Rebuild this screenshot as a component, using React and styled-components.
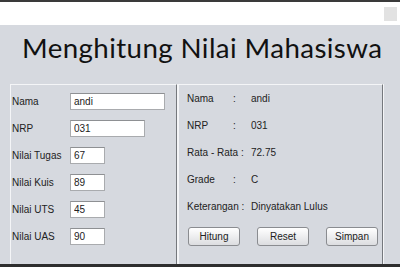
import React from 'react';
import styled, { createGlobalStyle } from 'styled-components';

const Global = createGlobalStyle`
  html, body {
    margin: 0;
    padding: 0;
    width: 400px;
    height: 267px;
    overflow: hidden;
    background: #d6d9df;
  }
`;

const Frame = styled.div`
  width: 400px;
  height: 267px;
  display: flex;
  flex-direction: column;
  overflow: hidden;
  font-family: "Liberation Sans", Arial, sans-serif;
`;

const TitleBar = styled.div`
  flex-shrink: 0;
  height: 23px;
  background: #fff;
  border-top: 2px solid #3a3a3a;
  display: flex;
  justify-content: flex-end;
  align-items: flex-start;
  padding-right: 3px;
`;

const WinButton = styled.div`
  width: 13px;
  height: 14px;
  margin-top: 5px;
  background: #e2e2e2;
`;

const Body = styled.div`
  flex: 1;
  min-height: 0;
  background: #d6d9df;
  border-bottom: 3px solid #2e2e2e;
  display: flex;
  flex-direction: column;
  overflow: hidden;
`;

const Heading = styled.h1`
  flex-shrink: 0;
  margin: 0;
  height: 59px;
  padding-left: 22px;
  font-family: Lato, "Open Sans", sans-serif;
  font-weight: 400;
  font-size: 27.7px;
  letter-spacing: 0.4px;
  white-space: nowrap;
  line-height: 45px;
  color: #111;
`;

const Panels = styled.div`
  flex-shrink: 0;
  display: flex;
  gap: 1px;
  padding-left: 10px;
`;

const Panel = styled.div`
  width: ${p => p.w}px;
  box-sizing: border-box;
  border: 1px solid;
  border-color: #f4f5f7 #75787d #75787d #f4f5f7;
  box-shadow: 1px 0 0 #f4f5f7;
  padding: ${p => p.pad};
  height: 200px;
`;

const FormGrid = styled.div`
  display: grid;
  grid-template-columns: 58px 1fr;
  grid-auto-rows: 27px;
  align-items: start;
`;

const Label = styled.label`
  font-size: 10px;
  color: #222;
  line-height: 17px;
`;

const Field = styled.input`
  box-sizing: border-box;
  width: ${p => p.w}px;
  height: 17px;
  border: 1px solid #a9abae;
  border-top-color: #8e9093;
  background: #fff;
  font-family: "Liberation Sans", Arial, sans-serif;
  font-size: 10px;
  color: #222;
  padding: 0 0 0 3px;
  margin: 0;
  outline: none;
`;

const ResultRow = styled.div`
  display: flex;
  height: 27px;
  align-items: center;
  font-size: 10px;
  color: #222;
`;

const Key = styled.span`
  width: 64px;
  display: flex;
  white-space: nowrap;
`;

const KeyName = styled.span`
  width: 46px;
`;

const Buttons = styled.div`
  display: flex;
  gap: 17px;
  margin-top: 7px;
  padding-left: 1px;
`;

const Button = styled.button`
  box-sizing: border-box;
  width: 52px;
  height: 19px;
  padding: 0;
  border: 1px solid #8a8c90;
  border-radius: 3px;
  background: linear-gradient(#ffffff, #dcdde0);
  font-family: "Liberation Sans", Arial, sans-serif;
  font-size: 10px;
  color: #222;
`;

const inputs = [
  { label: 'Nama', value: 'andi', w: 95 },
  { label: 'NRP', value: '031', w: 75 },
  { label: 'Nilai Tugas', value: '67', w: 35 },
  { label: 'Nilai Kuis', value: '89', w: 35 },
  { label: 'Nilai UTS', value: '45', w: 35 },
  { label: 'Nilai UAS', value: '90', w: 35 },
];

export default function App() {
  return (
    <Frame>
      <Global />
      <TitleBar>
        <WinButton />
      </TitleBar>
      <Body>
        <Heading>Menghitung Nilai Mahasiswa</Heading>
        <Panels>
          <Panel w={167} pad="8px 0 0 1px">
            <FormGrid>
              {inputs.map(i => (
                <React.Fragment key={i.label}>
                  <Label>{i.label}</Label>
                  <Field w={i.w} defaultValue={i.value} />
                </React.Fragment>
              ))}
            </FormGrid>
          </Panel>
          <Panel w={205} pad="0 0 0 8px">
            <ResultRow><Key><KeyName>Nama</KeyName>:</Key>andi</ResultRow>
            <ResultRow><Key><KeyName>NRP</KeyName>:</Key>031</ResultRow>
            <ResultRow><Key>Rata - Rata :</Key>72.75</ResultRow>
            <ResultRow><Key><KeyName>Grade</KeyName>:</Key>C</ResultRow>
            <ResultRow><Key>Keterangan :</Key>Dinyatakan Lulus</ResultRow>
            <Buttons>
              <Button>Hitung</Button>
              <Button>Reset</Button>
              <Button>Simpan</Button>
            </Buttons>
          </Panel>
        </Panels>
      </Body>
    </Frame>
  );
}
